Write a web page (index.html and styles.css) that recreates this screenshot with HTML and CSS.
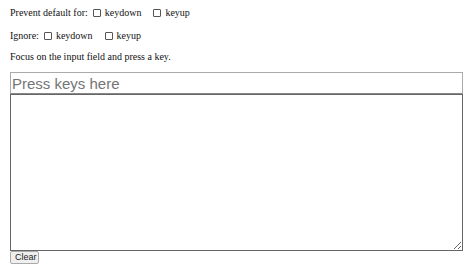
FILE: index.html
```html
<!DOCTYPE html>
<html>
<head>
<meta charset="utf-8">
<link rel="stylesheet" href="styles.css">
</head>
<body>
<div class="page">
  <p class="row first">Prevent default for:<label class="opt"><input type="checkbox" class="cb"> keydown</label><label class="opt"><input type="checkbox" class="cb"> keyup</label></p>
  <p class="row">Ignore:<label class="opt"><input type="checkbox" class="cb"> keydown</label><label class="opt"><input type="checkbox" class="cb"> keyup</label></p>
  <p class="row">Focus on the input field and press a key.</p>
  <input class="target" type="text" placeholder="Press keys here">
  <textarea class="output"></textarea>
  <button class="clear">Clear</button>
</div>
</body>
</html>
```
FILE: styles.css
```css
html, body { margin: 0; padding: 0; background: #fff; }
.page {
  padding: 7px 10px 0 10px;
  font-family: "Liberation Serif", "Times New Roman", serif;
  font-size: 10px;
  color: #111;
  display: flex;
  flex-direction: column;
  align-items: flex-start;
}
.row { margin: 0 0 9px 0; line-height: 12px; height: 12px; display: flex; align-items: center; }
.row.first { margin-bottom: 11px; }
.opt { display: inline-flex; align-items: center; margin-left: 5px; margin-right: 7px; }
.cb {
  -webkit-appearance: none;
  appearance: none;
  width: 8px; height: 8px;
  margin: 0 4px 0 0;
  border: 1px solid #555;
  border-radius: 1px;
  background: #fff;
  box-sizing: border-box;
}
.target {
  box-sizing: border-box;
  width: 453px;
  height: 22px;
  font-family: "Liberation Sans", Arial, sans-serif;
  font-size: 15px;
  padding: 0 1px;
  border: 1px solid #aaa;
  border-bottom-color: #888;
  margin: 0;
  outline: none;
}
.target::placeholder { color: #757575; }
.output {
  box-sizing: border-box;
  width: 453px;
  height: 157px;
  border: 1px solid #666;
  margin: 0;
  resize: both;
}
.clear {
  font-family: "Liberation Sans", Arial, sans-serif;
  font-size: 9px;
  color: #222;
  padding: 0 4px;
  width: 29px;
  height: 13px;
  line-height: 11px;
  margin: 0;
  border: 1px solid #aaa;
  background: #efefef;
  border-radius: 2px;
}
```
